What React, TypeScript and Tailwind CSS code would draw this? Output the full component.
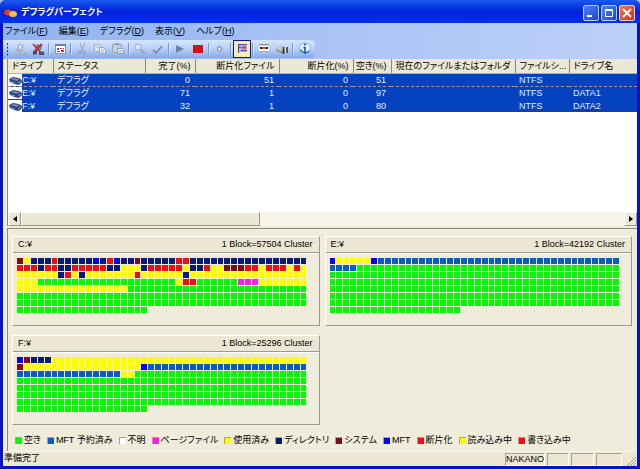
import React from 'react';

type Kind = 'free' | 'reserved' | 'unknown' | 'page' | 'used' | 'dir' | 'system' | 'mft' | 'frag' | 'reading' | 'writing';

const COLORS: Record<Kind, string> = {
  free: 'bg-[#00fb00]',
  reserved: 'bg-[#0a5cc0]',
  unknown: 'bg-white',
  page: 'bg-[#fb1cf0]',
  used: 'bg-[#fdfd00]',
  dir: 'bg-[#061a7c]',
  system: 'bg-[#7e0a1c]',
  mft: 'bg-[#0404f4]',
  frag: 'bg-[#f60a14]',
  reading: 'bg-[#fdfd00]',
  writing: 'bg-[#f60a14]',
};

const LEGEND: [Kind, string][] = [
  ['free', '空き'],
  ['reserved', 'MFT 予約済み'],
  ['unknown', '不明'],
  ['page', 'ページファイル'],
  ['used', '使用済み'],
  ['dir', 'ディレクトリ'],
  ['system', 'システム'],
  ['mft', 'MFT'],
  ['frag', '断片化'],
  ['reading', '読み込み中'],
  ['writing', '書き込み中'],
];

const CODES: Record<string, Kind> = {
  G: 'free', A: 'reserved', P: 'page', Y: 'used', N: 'dir', S: 'system', B: 'mft', R: 'frag',
};

// run-length maps, 42 blocks per row
const VOLUMES = [
  {
    name: 'C:¥',
    cluster: 57504,
    map: [
      'S1 Y1 N3 R1 N5 B1 N1 R1 B1 N2 S1 N5 R2 N17',
      'R3 N1 R2 N2 R5 N2 Y3 N1 R5 Y1 N2 R1 Y2 S3 R2 Y1 R3 Y1 R1 Y1',
      'Y6 N1 R1 Y1 N1 Y7 R1 Y6 N1 Y17',
      'Y3 G20 Y1 R2 G6 P3 Y7',
      'Y16 G26',
      'G42 G42 G19',
    ],
  },
  {
    name: 'E:¥',
    cluster: 42192,
    map: ['B1 Y5 B1 A35', 'A4 G38', 'G42 G42 G42 G42 G42 G19'],
  },
  {
    name: 'F:¥',
    cluster: 25296,
    map: ['B1 S1 N3 Y37', 'S1 Y17 B1 A23', 'A15 Y2 G25', 'G42 G42 G42 G42 G19'],
  },
];

const DRIVES = [
  { drive: 'C:¥', status: 'デフラグ', done: 0, files: 51, frag: 0, free: 51, fs: 'NTFS', label: '' },
  { drive: 'E:¥', status: 'デフラグ', done: 71, files: 1, frag: 0, free: 97, fs: 'NTFS', label: 'DATA1' },
  { drive: 'F:¥', status: 'デフラグ', done: 32, files: 1, frag: 0, free: 80, fs: 'NTFS', label: 'DATA2' },
];

const COLUMNS = [
  { title: 'ドライブ', width: 'w-[45px]', right: false },
  { title: 'ステータス', width: 'w-[92px]', right: false },
  { title: '完了(%)', width: 'w-[50px]', right: true },
  { title: '断片化ファイル', width: 'w-[84px]', right: true },
  { title: '断片化(%)', width: 'w-[74px]', right: true },
  { title: '空き(%)', width: 'w-[38px]', right: true },
  { title: '現在のファイルまたはフォルダ', width: 'w-[124px]', right: false },
  { title: 'ファイルシ...', width: 'w-[54px]', right: false },
  { title: 'ドライブ名', width: '', right: false },
];

const MENUS = [
  ['ファイル', 'F'],
  ['編集', 'E'],
  ['デフラグ', 'D'],
  ['表示', 'V'],
  ['ヘルプ', 'H'],
];

const expand = (map: string[]): Kind[] =>
  map
    .join(' ')
    .split(' ')
    .flatMap((run) => Array<Kind>(Number(run.slice(1))).fill(CODES[run[0]]));

const ToolButton: React.FC<{ label: string; active?: boolean; children: React.ReactNode }> = ({ label, active, children }) => (
  <button
    aria-label={label}
    className={`flex w-[18px] shrink-0 items-center justify-center self-stretch ${active ? 'border border-[#10206c] bg-[#f5eab8]' : ''}`}
  >
    <svg viewBox="0 0 16 14" className="h-3.5 w-4 shrink-0" fill="none">
      {children}
    </svg>
  </button>
);

const Separator = () => <span className="mx-px h-3 w-0.5 shrink-0 border-l border-r border-l-[#6f97d8] border-r-[#d9e7fc]" />;

const Toolbar = () => (
  <div className="flex h-[18px] w-fit items-center rounded-r bg-linear-to-b from-[#d6e5fc] via-[#b5cff6] to-[#86aae6] pr-0.5 pl-1">
    <svg viewBox="0 0 4 14" className="h-3.5 w-1 shrink-0" fill="#1c3c88">
      <path d="M0 1h1v2H0zM0 4.500h1v2H0zM0 8h1v2H0zM0 11.500h1v2H0z" />
    </svg>
    <ToolButton label="デフラグ開始">
      <path d="M6 4l2-2 3 2-1 3-3 1z" fill="#dde4ee" stroke="#97a4bc" />
      <path d="M6 7L3 12h4zM9 8l5 4H9z" fill="#c8d1df" stroke="#97a5bd" />
      <path d="M9 5l3 3" stroke="#e4b3b3" />
    </ToolButton>
    <ToolButton label="デフラグ中止">
      <path d="M5 4l3-2 4 2-1 4-5 1z" fill="#5c86b8" />
      <path d="M3 9l4-1v4l-4 1zM9 9l5 1v3H9z" fill="#2c4f88" />
      <path d="M3 2l9 10M12 2L4 10" stroke="#c82a28" strokeWidth="1.800" />
    </ToolButton>
    <Separator />
    <ToolButton label="スケジュール">
      <path d="M3.500 2.500h10v9h-10z" fill="#fff" stroke="#8292b0" />
      <path d="M3 2h11v2H3z" fill="#6a7ea8" />
      <path d="M5 6h2v2H5zM8 6h2v1H8zM9 8h3v2H9z" fill="#bb333b" />
      <path d="M5 9h3v1H5zM11 6h1v1h-1z" fill="#384f80" />
    </ToolButton>
    <Separator />
    <ToolButton label="切り取り">
      <path d="M6 1l3 8M11 1L7 9" stroke="#97a5bd" />
      <circle cx="5.5" cy="10.5" r="1.5" stroke="#8b9ab5" />
      <circle cx="10" cy="10.5" r="1.5" stroke="#8b9ab5" />
    </ToolButton>
    <ToolButton label="コピー">
      <path d="M2.500 2.500h5l1 1v6h-6z" fill="#dfe8f7" stroke="#a3b0c6" />
      <path d="M7.500 5.500h4l2 2v4h-6z" fill="#e8eefa" stroke="#98a6be" />
      <path d="M9 8h3M9 10h3M4 5h3" stroke="#a8b5ca" />
    </ToolButton>
    <ToolButton label="貼り付け">
      <path d="M2.500 2.500h9v8h-9z" fill="#c4cfdf" stroke="#98a5bb" />
      <path d="M5 1h4v2H5z" fill="#8f9db6" />
      <path d="M7.500 6.500h5l1 1v4h-6z" fill="#e8eefa" stroke="#8d9cb5" />
      <path d="M9 9h3" stroke="#8495b0" />
    </ToolButton>
    <Separator />
    <ToolButton label="検索">
      <circle cx="6" cy="5" r="3" fill="#dce8fa" stroke="#a0aec6" />
      <path d="M8 7l5 5" stroke="#98a5bb" strokeWidth="1.800" />
    </ToolButton>
    <ToolButton label="確認">
      <path d="M3 8l3 3 6-7" stroke="#6c80a0" strokeWidth="1.300" />
    </ToolButton>
    <Separator />
    <ToolButton label="開始">
      <path d="M4 3l8 4-8 4z" fill="#6a86a4" />
    </ToolButton>
    <ToolButton label="停止">
      <path d="M3 3h10v8H3z" fill="#d80e16" />
    </ToolButton>
    <Separator />
    <ToolButton label="設定">
      <path d="M7.500 3v8M3.500 7h8M5 4.500l5 5M10 4.500l-5 5" stroke="#b4bece" />
      <circle cx="7.500" cy="7" r="2" fill="#edf3fc" stroke="#74849e" />
    </ToolButton>
    <Separator />
    <ToolButton label="ブロック表示" active>
      <path d="M4 2h9v8H4z" fill="#b4a8dc" />
      <path d="M4 2.500h9M4 5.500h3M7 8.500h6" stroke="#4656b0" />
      <path d="M8 5.500h4" stroke="#d53655" strokeWidth="2" />
      <path d="M4.500 2v9" stroke="#3c50a0" />
    </ToolButton>
    <Separator />
    <ToolButton label="レポート">
      <path d="M3 2h10v1H3z" fill="#8d8d98" />
      <path d="M3 4h10v5H3z" fill="#fff" />
      <path d="M4 5h8v2H4z" fill="#2c2430" />
      <path d="M6 5h4v2H6z" fill="#d64a28" />
      <path d="M3 9h10v1H3z" fill="#a9acb8" />
    </ToolButton>
    <ToolButton label="ドライブ情報">
      <path d="M2 7l5-3 6 2v4l-4 2-7-3z" fill="#8d95a2" />
      <path d="M2 7l5-3 4 2-4 3z" fill="#c4c9d2" />
      <path d="M9.500 5v7M13 5v6" stroke="#30343c" strokeWidth="1.500" />
      <path d="M11.500 4v7" stroke="#eee" />
    </ToolButton>
    <Separator />
    <ToolButton label="バージョン情報">
      <path d="M8.500 1a5.500 5 0 1 1-2 9.500L4 12l.6-3A5 5 0 0 1 8.500 1z" fill="#e2f2fe" stroke="#8ab8e4" />
      <path d="M4.500 7.500A5 5 0 0 0 13 9" stroke="#2c6cb8" strokeWidth="1.500" />
      <path d="M8 2.500h2M7.500 5.500h1.500v6" stroke="#174a9c" strokeWidth="1.500" />
    </ToolButton>
  </div>
);

const DriveIcon = () => (
  <svg viewBox="0 0 14 12" className="h-3 w-3.5 shrink-0">
    <path d="M1 5l4-2 6 1 3 2v2l-3 3-5-1-4-2z" fill="#2c4478" />
    <path d="M2 5l4-1 6 1-3 2z" fill="#7486ac" />
    <path d="M3 8l4 1M10 9l3-2" stroke="#8fa8d8" />
  </svg>
);

const DriveTable = () => (
  <table className="w-full table-fixed border-collapse text-[9px] leading-3">
    <thead>
      <tr className="h-[14px] bg-[#ece8d6]">
        {COLUMNS.map((col) => (
          <th
            key={col.title}
            className={`${col.width} border-r border-b border-r-[#8c8878] border-b-[#b8b29c] p-0 font-normal whitespace-nowrap last:border-r-0 ${col.right ? 'pr-1 text-right' : 'pl-1 text-left'}`}
          >
            {col.title}
          </th>
        ))}
      </tr>
    </thead>
    <tbody className="text-[#e4ecff]">
      {DRIVES.map((d, i) => (
        <tr
          key={d.drive}
          className={`h-[13px] bg-[#0442c0] ${i === 0 ? 'border-t border-b border-dashed border-[#b88c78]' : ''}`}
        >
          <td className="p-0">
            <div className="flex items-center">
              <span className="flex bg-white"><DriveIcon /></span>
              {d.drive}
            </div>
          </td>
          <td className="p-0 pl-1">{d.status}</td>
          <td className="p-0 pr-[5px] text-right">{d.done}</td>
          <td className="p-0 pr-[5px] text-right">{d.files}</td>
          <td className="p-0 pr-[5px] text-right">{d.frag}</td>
          <td className="p-0 pr-[5px] text-right">{d.free}</td>
          <td className="p-0" />
          <td className="p-0 pl-1">{d.fs}</td>
          <td className="p-0 pl-1">{d.label}</td>
        </tr>
      ))}
    </tbody>
  </table>
);

const ScrollBar = () => (
  <div className="flex h-[14px] bg-[#f6f3e8]">
    <button aria-label="左へスクロール" className="flex w-[13px] items-center justify-center border border-[#9c9884] border-t-white border-l-white bg-[#ece8d6]">
      <svg viewBox="0 0 4 6" className="h-1.5 w-1"><path d="M4 0v6L0 3z" /></svg>
    </button>
    <div className="w-[38%] border border-[#9c9884] border-t-white border-l-white bg-[#ece8d6]" />
    <div className="flex-1" />
    <button aria-label="右へスクロール" className="flex w-[13px] items-center justify-center border border-[#9c9884] border-t-white border-l-white bg-[#ece8d6]">
      <svg viewBox="0 0 4 6" className="h-1.5 w-1"><path d="M0 0v6l4-3z" /></svg>
    </button>
  </div>
);

const VolumePanel: React.FC<{ volume: (typeof VOLUMES)[number] }> = ({ volume }) => (
  <section className="border border-t-white border-r-[#9c9a8a] border-b-[#9c9a8a] border-l-white">
    <header className="flex h-4 items-center justify-between border-b border-[#9c9a8a] bg-[#ebe7d3] pr-1.5 pl-[5px] text-[9px]">
      <h2>{volume.name}</h2>
      <span>1 Block={volume.cluster} Cluster</span>
    </header>
    <div className="grid grid-cols-[repeat(42,minmax(0,1fr))] gap-px border-t border-white pt-1 pr-3 pb-3 pl-1">
      {expand(volume.map).map((kind, i) => (
        <span key={i} className={`h-1.5 ${COLORS[kind]}`} />
      ))}
    </div>
  </section>
);

const StatusBar = () => (
  <footer className="flex h-[15px] shrink-0 items-center border-t border-[#f8f6ec] bg-[#ebe7d3] text-[9px]">
    <span className="flex-1 pl-px">準備完了</span>
    <div className="flex h-[13px] gap-0.5 leading-[11px]">
      <span className="w-10 border border-[#a5a290] border-r-white border-b-white text-center">NAKANO</span>
      <span className="w-[22px] border border-[#a5a290] border-r-white border-b-white" />
      <span className="w-[23px] border border-[#a5a290] border-r-white border-b-white" />
      <span className="w-[26px] border border-[#a5a290] border-r-white border-b-white" />
    </div>
    <svg viewBox="0 0 10 10" className="mr-px ml-1 h-2.5 w-2.5 self-end" stroke="#a09c88">
      <path d="M1 10l9-9M4 10l6-6M7 10l3-3" />
    </svg>
  </footer>
);

const TitleBar = () => (
  <header className="flex h-[23px] shrink-0 items-center gap-1 bg-linear-to-b from-[#1c58f0] via-[#0420d8] to-[#0230f4] pt-0.5 pr-[5px] pl-1">
    <svg viewBox="0 0 13 10" className="h-2.5 w-[13px] shrink-0">
      <ellipse cx="4" cy="4.500" rx="4" ry="3" fill="#e83c10" />
      <ellipse cx="9" cy="6" rx="4" ry="3" fill="#f6bf3c" />
      <path d="M6 5l2 2" stroke="#fff6c8" />
    </svg>
    <h1 className="flex-1 text-[9px] font-bold text-white">デフラグパーフェクト</h1>
    <div className="flex gap-0.5">
      <button aria-label="最小化" className="h-4 w-4 rounded-xs border border-[#b8ccfc] bg-linear-to-br from-[#5083f4] to-[#1a48c8]">
        <svg viewBox="0 0 14 14" className="size-3.5"><path d="M3 9h5v2H3z" fill="#fff" /></svg>
      </button>
      <button aria-label="最大化" className="h-4 w-4 rounded-xs border border-[#b8ccfc] bg-linear-to-br from-[#5083f4] to-[#1a48c8]">
        <svg viewBox="0 0 14 14" className="size-3.5" fill="none" stroke="#fff"><path d="M3.500 3.500h7v7h-7zM3 4.500h8" /></svg>
      </button>
      <button aria-label="閉じる" className="h-4 w-4 rounded-xs border border-[#f4d0c8] bg-linear-to-br from-[#f07850] to-[#cc2c10]">
        <svg viewBox="0 0 14 14" className="size-3.5" stroke="#fff" strokeWidth="1.800"><path d="M3 3l8 8M11 3l-8 8" /></svg>
      </button>
    </div>
  </header>
);

const App: React.FC = () => (
  <div className="flex min-h-screen flex-col bg-[#a9b8e8] font-['Liberation_Sans','Noto_Sans_CJK_JP',sans-serif] text-black [font-feature-settings:'palt']">
    <div className="flex flex-1 flex-col overflow-hidden rounded-t-md bg-[#0414c4]">
      <TitleBar />
      <div className="mx-[3px] mb-[3px] flex flex-1 flex-col bg-[#efecdb]">
        <div className="bg-linear-to-r from-[#8fb3f0] via-[#a9c3f5] to-[#bcd1f8] pb-px">
          <nav className="flex h-[17px] items-center gap-[11px] pl-0.5 text-[9px]">
            {MENUS.map(([name, key]) => (
              <button key={key} className="whitespace-nowrap">
                {name}(<u>{key}</u>)
              </button>
            ))}
          </nav>
          <Toolbar />
        </div>

        <main className="flex flex-1 flex-col pl-1">
          <div className="flex flex-1 flex-col border-l border-[#8c8a7c] bg-white">
            <DriveTable />
            <div className="flex-1" />
            <ScrollBar />
          </div>

          <div className="mt-0.5 border-t border-l border-[#8c8a7c] pt-[7px] pr-[5px] pb-[3px] pl-1">
            <div className="grid grid-cols-2 gap-x-[5px] gap-y-[9px]">
              {VOLUMES.map((v) => (
                <VolumePanel key={v.name} volume={v} />
              ))}
            </div>
            <ul className="mt-[7px] flex flex-wrap items-center gap-x-1.5 pl-[3px] text-[9px] leading-4">
              {LEGEND.map(([kind, label]) => (
                <li key={kind} className="flex items-center gap-0.5 whitespace-nowrap">
                  <span className={`size-[7px] border border-r-0 border-b-0 border-[#a3a090] ${COLORS[kind]}`} />
                  {label}
                </li>
              ))}
            </ul>
          </div>
        </main>
        <StatusBar />
      </div>
    </div>
  </div>
);

export default App;
